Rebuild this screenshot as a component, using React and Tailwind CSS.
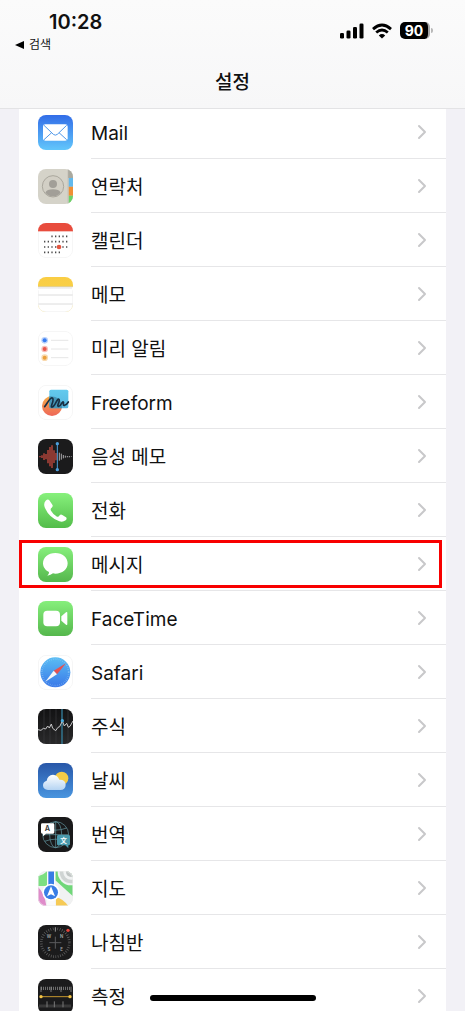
import React from "react";

// Every app icon is drawn on the same 105 x 105 grid
const IconBase = ({ children, className = "" }) => (
  <svg viewBox="0 0 105 105" aria-hidden="true" className={`w-[35px] h-[35px] shrink-0 rounded-lg ${className}`}>
    {children}
  </svg>
);

const Gradient = ({ id, from, to }) => (
  <>
    <defs>
      <linearGradient id={id} x1="0" y1="0" x2="0" y2="1">
        <stop offset="0" stopColor={from} />
        <stop offset="1" stopColor={to} />
      </linearGradient>
    </defs>
    <rect width="105" height="105" fill={`url(#${id})`} />
  </>
);

const WhiteFrame = () => (
  <rect x="1" y="1" width="103" height="103" rx="23" fill="none" stroke="#efefef" strokeWidth="2" />
);

const MailIcon = () => (
  <IconBase>
    <Gradient id="mail" from="#326de8" to="#62c6fb" />
    <rect x="15" y="28" width="74" height="49" rx="7" fill="#fff" />
    <path d="M18 31 L46 58 Q52 63 58 58 L86 31 M18 74 L41 53 M86 74 L63 53" fill="none" stroke="#4f98ea" strokeWidth="3" />
  </IconBase>
);

const ContactsIcon = () => (
  <IconBase>
    <rect width="105" height="105" fill="#d5d3c9" />
    <path d="M90 0h15v27H90z" fill="#aaa99f" />
    <path d="M92 27h13v26H92z" fill="#62b9ed" />
    <path d="M92 53h13v27H92z" fill="#ef8f35" />
    <path d="M92 80h13v25H92z" fill="#6bd267" />
    <path d="M90 0v105" stroke="#bcbab0" strokeWidth="2" />
    <circle cx="45" cy="52" r="32" fill="#d2cfc5" stroke="#aaa79d" strokeWidth="3" />
    <circle cx="45" cy="45" r="12" fill="#a29f98" />
    <path d="M22 71 Q27 61 45 61 Q63 61 68 71 Q59 82 45 82 Q31 82 22 71" fill="#a29f98" />
  </IconBase>
);

const CalendarIcon = () => (
  <IconBase>
    <rect width="105" height="105" fill="#fff" />
    <WhiteFrame />
    <rect width="105" height="25" fill="#e84c3d" />
    <g fill="none" stroke="#4b4b4b" strokeWidth="5" strokeDasharray="4 7">
      <path d="M40 40h50" />
      <path d="M18 56h70" />
      <path d="M18 72h70" />
      <path d="M18 88h50" />
    </g>
    <circle cx="63" cy="72" r="7" fill="#e4553f" />
  </IconBase>
);

const NotesIcon = () => (
  <IconBase>
    <Gradient id="notes" from="#facd43" to="#f6d550" />
    <rect y="29" width="105" height="76" fill="#fff" />
    <path d="M0 29h105" stroke="#d2c493" strokeWidth="2" />
    <path d="M2 33h101" stroke="#aaa" strokeWidth="3" strokeDasharray="2 4" />
    <path d="M0 54h105M0 81h105" stroke="#dcdcdc" strokeWidth="3" />
    <path d="M1 40v41q0 23 23 23h57q23 0 23-23V40" fill="none" stroke="#efefef" strokeWidth="2" />
  </IconBase>
);

const RemindersIcon = () => (
  <IconBase>
    <rect width="105" height="105" fill="#fff" />
    <WhiteFrame />
    {[
      { y: 28, color: "#397cf0", halo: "#b8d1fb" },
      { y: 54, color: "#e9564b", halo: "#f8beb9" },
      { y: 80, color: "#eba03c", halo: "#f9d9ae" },
    ].map(({ y, color, halo }) => (
      <g key={y}>
        <circle cx="20" cy={y} r="10" fill={halo} />
        <circle cx="20" cy={y} r="6" fill={color} />
        <path d={`M39 ${y}h52`} stroke="#d9d9d9" strokeWidth="2" />
      </g>
    ))}
  </IconBase>
);

const FreeformIcon = () => (
  <IconBase>
    <defs>
      <linearGradient id="freeformBall" x1="0" y1="0" x2="0" y2="1">
        <stop offset="0" stopColor="#f5ab48" />
        <stop offset="1" stopColor="#ee6658" />
      </linearGradient>
      <linearGradient id="freeformNote" x1="0" y1="0" x2="0" y2="1">
        <stop offset="0" stopColor="#63caee" />
        <stop offset="1" stopColor="#56b7e0" />
      </linearGradient>
    </defs>
    <rect width="105" height="105" fill="#fff" />
    <WhiteFrame />
    <circle cx="42" cy="63" r="30" fill="url(#freeformBall)" />
    <rect x="34" y="14" width="57" height="56" rx="5" fill="url(#freeformNote)" />
    <path d="M34 34 Q51 32 63 42 Q73 54 72 70 H39 Q34 70 34 65Z" fill="#397f9e" opacity=".65" />
    <path d="M20 65 C27 57 38 33 44 40 C50 47 34 68 43 66 C51 65 57 39 63 43 C68 47 54 64 62 64 C69 64 72 48 76 51 C79 53 72 63 80 61 Q86 59 91 51" fill="none" stroke="#182f43" strokeWidth="5" strokeLinecap="round" />
  </IconBase>
);

const VoiceMemosIcon = () => (
  <IconBase>
    <rect width="105" height="105" fill="#1b1b1c" />
    <path d="M6 51v4M12 49v8M18 43v20M24 45v16M30 33v40M36 24v58M42 19v68M48 34v38M54 42v22" stroke="#c5493e" strokeWidth="4" />
    <path d="M64 41v24M70 44v18M76 48v10M82 50v6M88 51v4M94 51v4M100 52v2" stroke="#aaa9ad" strokeWidth="3" />
    <path d="M58 14v78" stroke="#4e9fdc" strokeWidth="3" />
    <circle cx="58" cy="14" r="5" fill="#4e9fdc" />
    <circle cx="58" cy="92" r="5" fill="#4e9fdc" />
  </IconBase>
);

const PhoneIcon = () => (
  <IconBase>
    <Gradient id="phone" from="#87f17c" to="#52bc49" />
    <path d="M23 23 Q30 16 34 22 L43 35 Q46 40 41 44 Q36 48 39 53 Q46 65 57 71 Q61 73 65 67 Q68 63 73 66 L84 73 Q88 76 83 82 Q74 89 64 85 Q33 74 20 43 Q16 31 23 23Z" fill="#fff" />
  </IconBase>
);

const MessagesIcon = () => (
  <IconBase>
    <Gradient id="messages" from="#86ef7c" to="#55b74c" />
    <path d="M52 18 C74 18 89 32 89 49 C89 68 73 80 52 80 Q48 80 45 79 Q38 85 28 86 Q34 80 33 75 C22 70 15 60 15 49 C15 32 30 18 52 18Z" fill="#fff" />
  </IconBase>
);

const FaceTimeIcon = () => (
  <IconBase>
    <Gradient id="facetime" from="#86ef7c" to="#55b74c" />
    <rect x="16" y="29" width="50" height="47" rx="12" fill="#fff" />
    <path d="M70 46 L84 34 Q88 31 88 36 V69 Q88 74 84 71 L70 59Z" fill="#fff" />
  </IconBase>
);

const SafariIcon = () => (
  <IconBase>
    <defs>
      <linearGradient id="safari" x1="0" y1="0" x2="0" y2="1">
        <stop offset="0" stopColor="#5abdf4" />
        <stop offset="1" stopColor="#3a78e8" />
      </linearGradient>
    </defs>
    <rect width="105" height="105" fill="#fff" />
    <WhiteFrame />
    <circle cx="52" cy="52" r="45" fill="url(#safari)" />
    <circle cx="52" cy="52" r="40" fill="none" stroke="#a6d5f9" strokeWidth="5" strokeDasharray="1 5" />
    <path d="M84 25 L47 47 L57 58Z" fill="#e65252" />
    <path d="M22 80 L47 47 L57 58Z" fill="#f5f7fa" />
  </IconBase>
);

const StocksIcon = () => (
  <IconBase>
    <Gradient id="stocks" from="#121213" to="#29292a" />
    <path d="M18 0v105M36 0v105M54 0v105M90 0v105" stroke="#3a3a3c" strokeWidth="2" />
    <path d="M72 0v105" stroke="#347f9c" strokeWidth="4" />
    <path d="M0 62 L9 64 L16 58 L23 60 L29 51 L34 57 L40 45 L44 58 L53 65 L60 55 L65 53 L73 36 L79 51 L86 43 L91 55 L96 52 L105 36" fill="none" stroke="#c9c9ca" strokeWidth="3" />
    <circle cx="73" cy="35" r="5" fill="#4caee0" />
  </IconBase>
);

const WeatherIcon = () => (
  <IconBase>
    <defs>
      <linearGradient id="cloud" x1="0" y1="0" x2="0" y2="1">
        <stop offset="0" stopColor="#fff" />
        <stop offset="1" stopColor="#b5d4f3" />
      </linearGradient>
    </defs>
    <Gradient id="weather" from="#2857a8" to="#4995df" />
    <circle cx="71" cy="46" r="20" fill="#f5cc47" />
    <path d="M30 81 Q15 80 15 67 Q15 56 26 53 Q29 36 45 35 Q59 36 64 50 Q82 49 83 65 Q83 80 67 81Z" fill="url(#cloud)" />
  </IconBase>
);

const TranslateIcon = () => (
  <IconBase>
    <rect width="105" height="105" fill="#19191a" />
    <g fill="none" stroke="#659ba6" strokeWidth="2">
      <circle cx="53" cy="53" r="39" />
      <ellipse cx="53" cy="53" rx="18" ry="39" />
      <path d="M53 14v78M14 53h78M20 33q33 13 66 0M20 73q33-13 66 0" />
    </g>
    <path d="M13 19h32q4 0 4 4v23q0 4-4 4H24l-9 8v-8h-2q-4 0-4-4V23q0-4 4-4Z" fill="#fff" />
    <text x="28" y="43" textAnchor="middle" fontFamily="Inter, sans-serif" fontSize="22" fontWeight="600" fill="#333">A</text>
    <path d="M61 54h31q4 0 4 4v23q0 4-4 4h-1v9l-9-9H61q-4 0-4-4V58q0-4 4-4Z" fill="#4999ac" />
    <text x="77" y="78" textAnchor="middle" fontFamily="'Noto Sans CJK SC', sans-serif" fontSize="20" fontWeight="700" fill="#fff">文</text>
  </IconBase>
);

const MapsIcon = () => (
  <IconBase>
    <rect width="105" height="105" fill="#f1f2f2" />
    <path d="M0 15 Q17 12 27 0 V45 H0Z" fill="#7cdf81" />
    <path d="M52 0 H105 V76 L52 28Z" fill="#70d779" />
    <circle cx="99" cy="3" r="40" fill="#f1f3f3" />
    <circle cx="99" cy="3" r="34" fill="#cfd4d3" />
    <circle cx="99" cy="3" r="23" fill="#f1f3f3" />
    <circle cx="99" cy="3" r="15" fill="#c1c6c5" />
    <path d="M0 48 Q20 66 25 105 H0Z" fill="#df8cca" />
    <path d="M54 79 Q74 83 91 105 H54Z" fill="#f6ca55" />
    <path d="M27 0h25v105H27z" fill="#fafafa" />
    <path d="M31 0h17v48H31z" fill="#397de5" />
    <circle cx="39" cy="64" r="26" fill="#fff" />
    <circle cx="39" cy="64" r="21" fill="#397de5" />
    <path d="M39 46 L51 76 L39 70 L27 76Z" fill="#fff" />
    <WhiteFrame />
  </IconBase>
);

const CompassIcon = () => (
  <IconBase>
    <rect width="105" height="105" fill="#1b1b1c" />
    <circle cx="52" cy="53" r="42" fill="none" stroke="#666" strokeWidth="8" strokeDasharray="2 5" />
    <path d="M52 35v36M34 53h36" stroke="#5b5b5d" strokeWidth="3" />
    <path d="M52 7v13" stroke="#999" strokeWidth="3" />
    <circle cx="90" cy="16" r="5" fill="#e3433a" />
    <g fontFamily="Inter, sans-serif" fontSize="13" fontWeight="600" fill="#aaa" textAnchor="middle">
      <text x="33" y="39">W</text>
      <text x="71" y="39">N</text>
      <text x="33" y="78">S</text>
      <text x="71" y="78">E</text>
    </g>
  </IconBase>
);

const MeasureIcon = () => (
  <IconBase>
    <rect width="105" height="105" fill="#1b1b1c" />
    <path d="M9 23v16M39 23v16M69 23v16M99 23v16M27 67v18M49 67v18M75 67v18" stroke="#aaa" strokeWidth="2" />
    <path d="M9 28H99" stroke="#999" strokeWidth="10" strokeDasharray="2 4" />
    <path d="M5 81H101" stroke="#777" strokeWidth="9" strokeDasharray="2 4" />
    <path d="M9 53h87" stroke="#c4962e" strokeWidth="3" />
    <circle cx="9" cy="53" r="5" fill="#f2c345" />
    <circle cx="96" cy="53" r="5" fill="#f2c345" />
  </IconBase>
);

const apps = [
  { id: "mail", name: "Mail", Icon: MailIcon },
  { id: "contacts", name: "연락처", Icon: ContactsIcon },
  { id: "calendar", name: "캘린더", Icon: CalendarIcon },
  { id: "notes", name: "메모", Icon: NotesIcon },
  { id: "reminders", name: "미리 알림", Icon: RemindersIcon },
  { id: "freeform", name: "Freeform", Icon: FreeformIcon },
  { id: "voice-memos", name: "음성 메모", Icon: VoiceMemosIcon },
  { id: "phone", name: "전화", Icon: PhoneIcon },
  { id: "messages", name: "메시지", Icon: MessagesIcon, highlighted: true },
  { id: "facetime", name: "FaceTime", Icon: FaceTimeIcon },
  { id: "safari", name: "Safari", Icon: SafariIcon },
  { id: "stocks", name: "주식", Icon: StocksIcon },
  { id: "weather", name: "날씨", Icon: WeatherIcon },
  { id: "translate", name: "번역", Icon: TranslateIcon },
  { id: "maps", name: "지도", Icon: MapsIcon },
  { id: "compass", name: "나침반", Icon: CompassIcon },
  { id: "measure", name: "측정", Icon: MeasureIcon },
];

const Chevron = () => (
  <svg viewBox="0 0 10 16" fill="none" aria-hidden="true" className="w-[10px] h-4 shrink-0">
    <path d="M2 2l6 6-6 6" stroke="#c8c8ca" strokeWidth="2" strokeLinecap="round" strokeLinejoin="round" />
  </svg>
);

const StatusIcons = () => (
  <div className="flex items-center gap-2">
    <svg viewBox="0 0 24 16" aria-hidden="true" className="w-6 h-4">
      <rect x="0" y="10" width="4" height="5.5" rx="1.3" />
      <rect x="6.5" y="7.5" width="4" height="8" rx="1.3" />
      <rect x="13" y="4" width="4" height="11.5" rx="1.3" />
      <rect x="19.5" y="0.5" width="4" height="15" rx="1.3" />
    </svg>
    <svg viewBox="0 0 20 16" fill="none" stroke="#000" strokeWidth="2.8" aria-hidden="true" className="w-5 h-4">
      <path d="M1 6.1 Q10-2 19 6.1M4.2 9.5 Q10 4.5 15.8 9.5" />
      <path d="M10 15.5 L6.8 12.4 Q10 9.8 13.2 12.4Z" fill="#000" stroke="none" />
    </svg>
    <div className="flex items-center gap-px">
      <span className="flex h-[17px] w-[30px] items-center justify-center rounded-[5px] border-r-2 border-[#a5a5a5] bg-black text-sm font-bold leading-none text-white">90</span>
      <span className="h-[5px] w-0.5 rounded-r-full bg-[#b8b8b8]" />
    </div>
  </div>
);

const Header = () => (
  <header className="relative z-10 h-[109px] shrink-0 border-b border-[#e3e3e5] bg-linear-to-b from-[#fbfbfb] to-[#f7f7f8]">
    <div className="flex items-start justify-between pl-[15px] pr-8 pt-[11px]">
      <div>
        <div className="pl-[34px] text-xl font-semibold leading-[22px]">10:28</div>
        <button type="button" className="flex items-center gap-[5px] text-xs leading-6">
          <svg viewBox="0 0 9 8" aria-hidden="true" className="w-[9px] h-2">
            <path d="M0 4L9 0v8z" />
          </svg>
          검색
        </button>
      </div>
      <div className="pt-[11px]">
        <StatusIcons />
      </div>
    </div>
    <h1 className="pt-3 text-center text-[19px] font-medium leading-7">설정</h1>
  </header>
);

const AppRow = ({ app }) => {
  const { id, name, Icon, highlighted } = app;

  return (
    <li className="relative">
      <a href={`#${id}`} className="flex h-[54px] items-center gap-[18px] pl-[19px]">
        <Icon />
        <span className="flex h-full flex-1 items-center justify-between border-b border-[#e6e6e8] pr-[19px] text-[19px]">
          <span className="pt-1.5">{name}</span>
          <Chevron />
        </span>
      </a>
      {highlighted && (
        <div className="pointer-events-none absolute bottom-[3px] left-0 right-1 top-[-1px] mt-1 border-3 border-[#f80000]" />
      )}
    </li>
  );
};

const App = () => {
  return (
    <div className="relative flex h-screen flex-col overflow-hidden bg-[#f2f1f6] font-['Inter','Noto_Sans_CJK_KR',sans-serif] text-[#111]">
      <Header />
      <main className="-mt-1 min-h-0 flex-1 overflow-hidden px-[19px]">
        <ul className="bg-white">
          {apps.map((app) => (
            <AppRow key={app.id} app={app} />
          ))}
        </ul>
      </main>
      {/* Home indicator */}
      <div className="absolute bottom-[10px] left-1/2 h-[6px] w-[166px] -translate-x-1/2 rounded-full bg-black" />
    </div>
  );
};

export default App;
